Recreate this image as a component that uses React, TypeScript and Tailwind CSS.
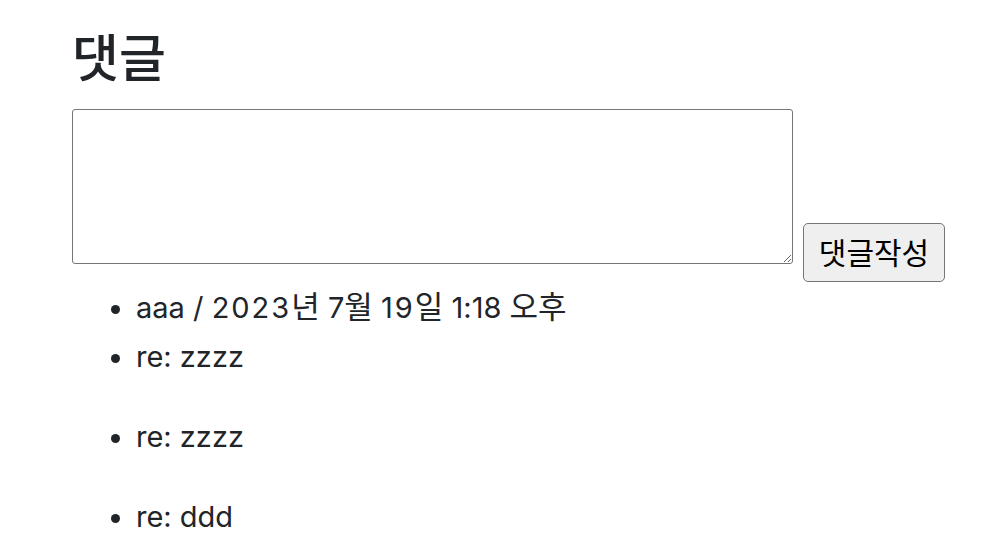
import React from "react";

export default function App() {
  const font = { fontFamily: 'Inter, "Noto Sans CJK KR", sans-serif' };
  const K = ({ children }: { children: React.ReactNode }) => (
    <span className="text-[31px]">{children}</span>
  );
  const D = ({ children }: { children: React.ReactNode }) => (
    <span className="tracking-[2px]">{children}</span>
  );
  return (
    <div className="bg-white w-[982px] h-[550px] overflow-hidden text-[#212529]" style={font}>
      <div className="pl-[72px] pt-[28px]">
        <h2 className="text-[51px] leading-[1.2] font-medium m-0">댓글</h2>
        <div className="flex items-start mt-[20px]">
          <textarea className="w-[721px] h-[155px] border-[1.5px] border-[#767676] rounded-[3px] resize block"></textarea>
          <button className="ml-[10px] mt-[114px] w-[142px] h-[59px] bg-[#efefef] border-[1.5px] border-[#767676] rounded-[5px] text-[30px] leading-none text-black">
            댓글작성
          </button>
        </div>
        <ul className="list-disc pl-[64px] text-[29px] leading-[38px] mt-[6px]">
          <li className="h-[50px]">
            aaa / <D>2023</D><K>년</K> 7<K>월</K> <D>19</D><K>일</K> 1:18 <K>오후</K>
          </li>
          <li className="h-[80px]">re: zzzz</li>
          <li className="h-[80px]">re: zzzz</li>
          <li>re: ddd</li>
        </ul>
      </div>
    </div>
  );
}
